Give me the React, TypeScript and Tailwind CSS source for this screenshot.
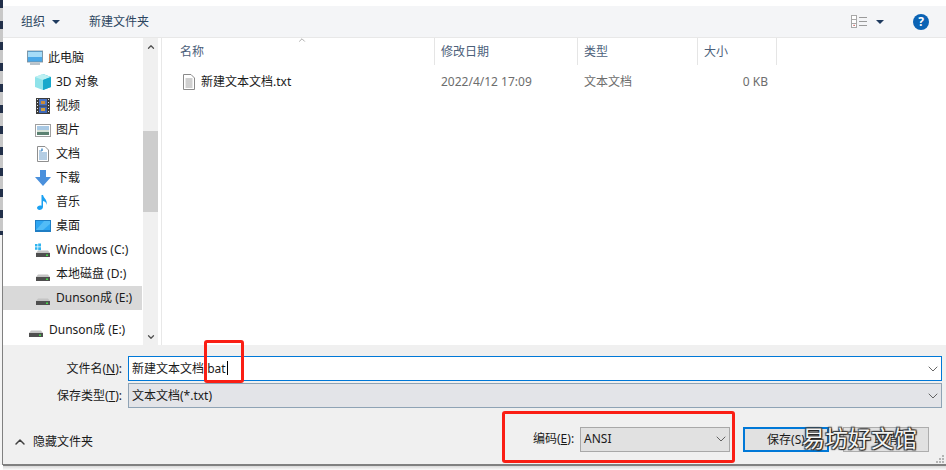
import type { ReactNode } from "react"
import { ChevronDown, ChevronUp } from "lucide-react"

const font = "font-['Noto_Sans','Noto_Sans_CJK_SC',sans-serif]"

function Caret() {
  return <span className="inline-block h-0 w-0 border-x-[4px] border-t-[4px] border-x-transparent border-t-[#1f3a5f]" />
}

function Monitor() {
  return (
    <svg width="16" height="16" viewBox="0 0 16 16">
      <rect x="0.4" y="1" width="15.2" height="11" fill="#4aa8e8" stroke="#7a8a96" strokeWidth="0.8" />
      <rect x="1" y="2" width="14" height="5" fill="#a6dcf8" />
      <rect x="3" y="12.5" width="10" height="2.5" fill="#b8c2ca" />
    </svg>
  )
}

function Cube() {
  return (
    <svg width="16" height="16" viewBox="0 0 16 16">
      <path d="M8 0 L16 3 V13 L8 16 Z" fill="#25b9d6" />
      <path d="M8 0 L0 3 V13 L8 16 Z" fill="#8fe3ea" />
      <path d="M8 0 L16 3 L8 6 L0 3 Z" fill="#bdf0f2" />
      <path d="M8 6 V16 L16 13 V3 Z" fill="#18a9cc" />
    </svg>
  )
}

function Film() {
  return (
    <svg width="14" height="16" viewBox="0 0 14 16">
      <rect width="14" height="16" fill="#3c3c3c" />
      <rect x="3" y="1" width="8" height="6.5" fill="#4a74c4" />
      <rect x="3" y="8.5" width="8" height="6.5" fill="#3f68b8" />
      <rect x="5" y="3" width="4" height="3" fill="#c88a3a" />
      <rect x="5" y="10" width="4" height="3" fill="#d0a040" />
      <path d="M1 1h1v1H1zM1 4h1v1H1zM1 7h1v1H1zM1 10h1v1H1zM1 13h1v1H1zM12 1h1v1h-1zM12 4h1v1h-1zM12 7h1v1h-1zM12 10h1v1h-1zM12 13h1v1h-1z" fill="#e8e8e8" />
    </svg>
  )
}

function Picture() {
  return (
    <svg width="16" height="13" viewBox="0 0 16 13">
      <rect x="0.5" y="0.5" width="15" height="12" fill="#fff" stroke="#a0a0a0" />
      <rect x="2" y="2" width="12" height="4" fill="#a9c9e4" />
      <rect x="2" y="6" width="12" height="2" fill="#d7e3d8" />
      <rect x="2" y="8" width="12" height="3" fill="#5c8272" />
    </svg>
  )
}

function Doc() {
  return (
    <svg width="12" height="16" viewBox="0 0 12 16">
      <path d="M0.5 0.5 H8 L11.5 4 V15.5 H0.5 Z" fill="#fff" stroke="#8f8f8f" />
      <path d="M2 5h3M2 7h8M2 9h8M2 11h8M2 13h8" stroke="#6a9cc8" strokeWidth="1" />
      <path d="M5 2.5 V5" stroke="#3a87c8" strokeWidth="1.4" />
    </svg>
  )
}

function Download() {
  return (
    <svg width="16" height="16" viewBox="0 0 16 16">
      <path d="M5 0 H11 V7 H16 L8 16 L0 7 H5 Z" fill="#4a90dc" />
    </svg>
  )
}

function Note() {
  return (
    <svg width="12" height="16" viewBox="0 0 12 16">
      <path d="M4.5 1 H6 C6.5 4 11 6 9.5 11 C9.5 8.5 8 7.5 6 7 V13 C6 15 4 16 2.5 16 C1 16 0 15 0 13.8 C0 12.4 1.6 11.4 3 11.4 C3.6 11.4 4.1 11.5 4.5 11.8 Z" fill="#1ba1f2" />
    </svg>
  )
}

function Desktop() {
  return (
    <svg width="16" height="12" viewBox="0 0 16 12">
      <rect width="16" height="12" fill="#1f7ec4" />
      <rect x="1" y="1" width="14" height="9" fill="#2ea6f2" />
      <path d="M1 10 L9 1 H15 V4 L8 10 Z" fill="#52bcf7" />
    </svg>
  )
}

function Drive({ win }: { win?: boolean }) {
  return (
    <svg width="16" height="16" viewBox="0 0 16 16">
      {win && <path d="M0 2h2.5v2.5H0zM3.2 1.5h2.8v3H3.2zM0 5.2h2.5v2.5H0zM3.2 5.2h2.8v3H3.2z" fill="#2fb4f0" />}
      <path d="M3 8.5 H13 L15 11 H1 Z" fill="#c4c4c4" />
      <rect x="1" y="11" width="14" height="4" fill="#4f4f4f" />
      <rect x="11" y="12.5" width="2" height="1.5" fill="#44d84a" />
    </svg>
  )
}

function NavRow({ icon, label, selected, className = "pl-[32px]" }: { icon: ReactNode; label: string; selected?: boolean; className?: string }) {
  return (
    <div className={`flex h-6 items-center gap-[5px] text-[12px] text-[#1a1a1a] ${className} ${selected ? "bg-[#d9d9d9]" : ""}`}>
      <span className="flex w-4 shrink-0 items-center justify-center">{icon}</span>
      <span className="whitespace-nowrap">{label}</span>
    </div>
  )
}

function ColHead({ label, className }: { label: string; className: string }) {
  return (
    <div className={`flex h-[27px] items-center border-r border-[#e5e5e5] text-[12px] text-[#4c607a] ${className}`}>{label}</div>
  )
}

export default function App() {
  return (
    <div className={`${font} relative flex h-[470px] w-[946px] overflow-hidden bg-white`}>
      {/* left edge of the window behind */}
      <div className="flex w-[3px] shrink-0 flex-col">
        <div className="h-[235px] bg-[repeating-linear-gradient(180deg,#22304a_0px,#22304a_8px,#c8c8c8_8px,#c8c8c8_21px)]" />
        <div className="h-[230px] border-r border-[#808080] bg-[#f4f4f4]" />
      </div>
      <div className="flex min-w-0 flex-1 flex-col">
        <div className="h-[6px] shrink-0 bg-white" />
        <div className="flex h-[32px] shrink-0 items-center justify-between border-b border-[#e8e8e8] bg-[#f4f5f7] pr-[17px] pl-[18px] text-[12px] text-[#2c4560]">
          <div className="flex items-center">
            <span>组织</span>
            <span className="ml-[7px] flex"><Caret /></span>
            <span className="ml-[29px]">新建文件夹</span>
          </div>
          <div className="flex items-center">
            <svg width="8" height="13" viewBox="0 0 8 13">
              <rect x="0.5" y="0.5" width="5" height="12" fill="#fff" stroke="#a8a8a8" />
              <path d="M1 4.5h4M1 8.5h4" stroke="#a8a8a8" />
              <rect x="2.5" y="9.8" width="1.2" height="1.2" fill="#c04040" />
            </svg>
            <svg width="8" height="13" viewBox="0 0 8 13">
              <path d="M0 2.5h8M0 6.5h8M0 10.5h8" stroke="#9a9a9a" />
            </svg>
            <span className="ml-[9px] flex"><Caret /></span>
            <span className="ml-[29px] flex h-4 w-4 items-center justify-center rounded-full bg-[#0b63b4] text-[12px] font-bold text-white">?</span>
          </div>
        </div>

        <div className="flex min-h-0 flex-1">
          {/* navigation pane */}
          <div className="relative flex w-[139px] shrink-0 flex-col pt-[8px]">
            <NavRow icon={<Monitor />} label="此电脑" className="pl-[24px]" />
            <NavRow icon={<Cube />} label="3D 对象" />
            <NavRow icon={<Film />} label="视频" />
            <NavRow icon={<Picture />} label="图片" />
            <NavRow icon={<Doc />} label="文档" />
            <NavRow icon={<Download />} label="下载" />
            <NavRow icon={<Note />} label="音乐" />
            <NavRow icon={<Desktop />} label="桌面" />
            <NavRow icon={<Drive win />} label="Windows (C:)" />
            <NavRow icon={<Drive />} label="本地磁盘 (D:)" />
            <NavRow icon={<Drive />} label="Dunson成 (E:)" selected />
            <NavRow icon={<Drive />} label="Dunson成 (E:)" className="mt-[8px] pl-[25px]" />
          </div>
          {/* scrollbar */}
          <div className="ml-px flex w-[15px] shrink-0 flex-col justify-between bg-[#f0f0f0]">
            <div className="flex flex-col">
              <div className="flex h-[17px] items-center justify-center"><ChevronUp size={10} strokeWidth={3} color="#505050" /></div>
              <div className="mt-[76px] h-[81px] bg-[#cdcdcd]" />
            </div>
            <div className="flex h-[17px] items-center justify-center"><ChevronDown size={10} strokeWidth={3} color="#505050" /></div>
          </div>
          <div className="w-[4px] shrink-0 border-r border-[#e8e8e8] bg-white" />

          {/* file list */}
          <div className="relative min-w-0 flex-1">
            <ChevronUp size={10} strokeWidth={1.5} color="#7a7a7a" className="absolute top-[-3px] left-[135px]" />
            <div className="flex">
              <ColHead label="名称" className="w-[273px] pl-[18px]" />
              <ColHead label="修改日期" className="w-[143px] pl-[6px]" />
              <ColHead label="类型" className="w-[120px] pl-[6px]" />
              <ColHead label="大小" className="w-[79px] pl-[6px]" />
            </div>
            <div className="mt-[5px] flex h-6 items-center text-[12px]">
              <div className="flex w-[273px] items-center pl-[21px] text-[#1a1a1a]">
                <svg width="12" height="16" viewBox="0 0 12 16">
                  <path d="M0.5 0.5 H8 L11.5 4 V15.5 H0.5 Z" fill="#fff" stroke="#8a8a8a" />
                  <path d="M2.5 5h7M2.5 7h7M2.5 9h7M2.5 11h7M2.5 13h7" stroke="#a0a0a0" />
                </svg>
                <span className="ml-[6px]">新建文本文档.txt</span>
              </div>
              <div className="w-[143px] pl-[6px] text-[#6d6d6d]">2022/4/12 17:09</div>
              <div className="w-[120px] pl-[6px] text-[#6d6d6d]">文本文档</div>
              <div className="w-[70px] text-right text-[#6d6d6d]">0 KB</div>
            </div>
          </div>
        </div>

        {/* bottom form */}
        <div className="flex h-[119px] shrink-0 flex-col bg-[#f0f0f0] text-[12px] text-[#1a1a1a]">
          <div className="mt-[11px] flex h-[25px] items-center pr-[4px]">
            <span className="w-[124px] shrink-0 pr-[5px] text-right">文件名(<span className="underline">N</span>):</span>
            <div className="ml-px flex h-[25px] flex-1 items-center justify-between border border-[#0078d7] bg-white pl-[3px]">
              <span>新建文本文档.bat<span className="ml-[1px] inline-block h-[14px] w-px translate-y-[2px] bg-black" /></span>
              <ChevronDown size={16} strokeWidth={1.2} color="#404040" />
            </div>
          </div>
          <div className="mt-[2px] flex h-[25px] items-center pr-[4px]">
            <span className="w-[124px] shrink-0 pr-[5px] text-right">保存类型(<span className="underline">T</span>):</span>
            <div className="ml-px flex h-[25px] flex-1 items-center justify-between border border-[#8fa3b5] bg-[#e3e4e8] pl-[3px]">
              <span>文本文档(*.txt)</span>
              <ChevronDown size={16} strokeWidth={1.2} color="#404040" />
            </div>
          </div>
          <div className="mt-[18px] flex items-center pl-[9px]">
            <span className="mt-[5px] flex w-[16px] shrink-0"><ChevronUp size={16} strokeWidth={2.2} color="#404040" /></span>
            <span className="mt-[5px] ml-[5px] w-[500px] shrink-0">隐藏文件夹</span>
            <span className="w-[47px] shrink-0">编码(<span className="underline">E</span>):</span>
            <div className="flex h-[25px] w-[150px] shrink-0 items-center justify-between border border-[#a8a8a8] bg-[#e1e1e1] pl-[3px]">
              <span>ANSI</span>
              <ChevronDown size={16} strokeWidth={1.2} color="#404040" />
            </div>
            <div className="mt-px ml-[13px] flex h-[25px] w-[86px] shrink-0 items-center justify-center border-2 border-[#0078d7] bg-[#e1e1e1]">保存(S)</div>
            <div className="mt-px ml-[14px] flex h-[25px] w-[86px] shrink-0 items-center justify-center border border-[#adadad] bg-[#e1e1e1]">取消</div>
          </div>
        </div>
        <div className="h-[2px] shrink-0 bg-[#808080]" />
        <div className="h-[4px] shrink-0 bg-[linear-gradient(#d8d8d8,#fbfbfb)]" />
      </div>

      {/* resize grip */}
      <svg width="9" height="9" viewBox="0 0 9 9" className="absolute top-[455px] left-[936px]">
        <path d="M6 0h2v2H6zM3 3h2v2H3zM6 3h2v2H6zM0 6h2v2H0zM3 6h2v2H3zM6 6h2v2H6z" fill="#b4b4b4" />
      </svg>

      {/* red annotations drawn over the screenshot */}
      <div className="absolute top-[340px] left-[204px] h-[43px] w-[40px] rounded-[3px] border-[3px] border-[#fa1e14]" />
      <div className="absolute top-[411px] left-[502px] h-[52px] w-[233px] rounded-[3px] border-[3px] border-[#fa1e14]" />

      {/* watermark */}
      <div className="absolute top-[422px] left-[802px] text-[23px] leading-[32px] whitespace-nowrap text-[#f4f4f4] [text-shadow:0_0_1px_#111,1px_1px_1px_#222,-1px_-1px_1px_#444,1px_-1px_1px_#444,-1px_1px_1px_#444]">易坊好文馆</div>
    </div>
  )
}
